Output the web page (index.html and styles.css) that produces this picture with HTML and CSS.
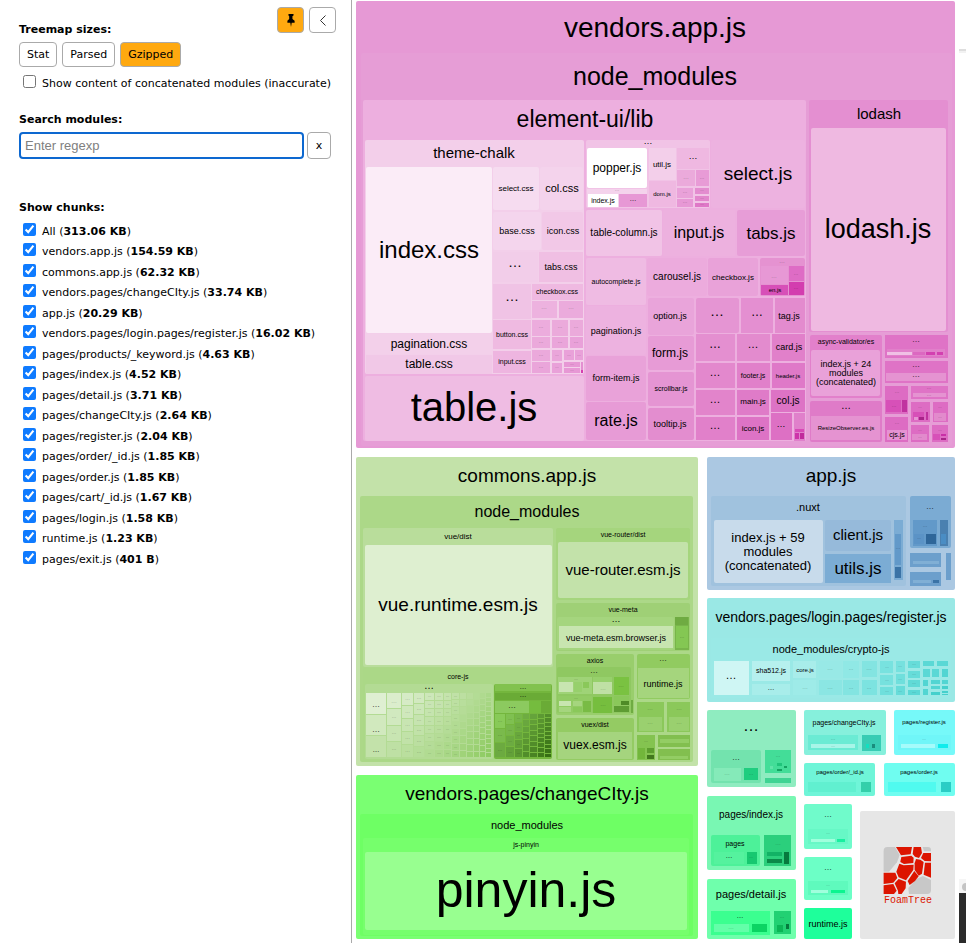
FILE: index.html
```html
<!DOCTYPE html>
<html lang="en">
<head>
<meta charset="utf-8">
<title>Webpack Bundle Analyzer</title>
<link rel="stylesheet" href="styles.css">
</head>
<body>
<div class="app">
  <aside class="sidebar">
    <div class="sidebar-top">
      <section class="sizes">
        <h2 class="heading">Treemap sizes:</h2>
        <div class="button-row">
          <button class="btn" type="button">Stat</button>
          <button class="btn" type="button">Parsed</button>
          <button class="btn active" type="button" aria-pressed="true">Gzipped</button>
        </div>
      </section>
      <div class="toggles">
        <button class="btn icon-btn active" type="button" aria-label="Pin">
          <svg width="8" height="13" viewBox="0 0 22 36"><path d="M4 0h14v4l-3 2v8l6 5v5h-8l-2 12-2-12H1v-5l5-5V6L4 4z"/></svg>
        </button>
        <button class="btn icon-btn" type="button" aria-label="Hide">
          <svg width="6" height="11" viewBox="0 0 6 11"><path d="M5.5.5.5 5.5l5 5" fill="none" stroke="#333"/></svg>
        </button>
      </div>
    </div>
    <label class="check concat"><input type="checkbox"><span>Show content of concatenated modules (inaccurate)</span></label>
    <section class="search">
      <h2 class="heading"><label for="q">Search modules:</label></h2>
      <div class="search-row">
        <input class="query" id="q" type="text" placeholder="Enter regexp">
        <button class="btn clear" type="button">x</button>
      </div>
    </section>
    <section class="chunks">
      <h2 class="heading">Show chunks:</h2>
      <div class="chunk-list">
        <label class="check"><input type="checkbox" checked><span>All (<b>313.06 KB</b>)</span></label>
        <label class="check"><input type="checkbox" checked><span>vendors.app.js (<b>154.59 KB</b>)</span></label>
        <label class="check"><input type="checkbox" checked><span>commons.app.js (<b>62.32 KB</b>)</span></label>
        <label class="check"><input type="checkbox" checked><span>vendors.pages/changeCIty.js (<b>33.74 KB</b>)</span></label>
        <label class="check"><input type="checkbox" checked><span>app.js (<b>20.29 KB</b>)</span></label>
        <label class="check"><input type="checkbox" checked><span>vendors.pages/login.pages/register.js (<b>16.02 KB</b>)</span></label>
        <label class="check"><input type="checkbox" checked><span>pages/products/_keyword.js (<b>4.63 KB</b>)</span></label>
        <label class="check"><input type="checkbox" checked><span>pages/index.js (<b>4.52 KB</b>)</span></label>
        <label class="check"><input type="checkbox" checked><span>pages/detail.js (<b>3.71 KB</b>)</span></label>
        <label class="check"><input type="checkbox" checked><span>pages/changeCIty.js (<b>2.64 KB</b>)</span></label>
        <label class="check"><input type="checkbox" checked><span>pages/register.js (<b>2.04 KB</b>)</span></label>
        <label class="check"><input type="checkbox" checked><span>pages/order/_id.js (<b>1.85 KB</b>)</span></label>
        <label class="check"><input type="checkbox" checked><span>pages/order.js (<b>1.85 KB</b>)</span></label>
        <label class="check"><input type="checkbox" checked><span>pages/cart/_id.js (<b>1.67 KB</b>)</span></label>
        <label class="check"><input type="checkbox" checked><span>pages/login.js (<b>1.58 KB</b>)</span></label>
        <label class="check"><input type="checkbox" checked><span>runtime.js (<b>1.23 KB</b>)</span></label>
        <label class="check"><input type="checkbox" checked><span>pages/exit.js (<b>401 B</b>)</span></label>
      </div>
    </section>
  </aside>
  <main class="map">
    <svg class="treemap" id="treemap" viewBox="352 0 614 943" role="img" aria-label="Bundle treemap">
      <g id="tiles"></g>
      <g id="labels"></g>
      <g transform="translate(700 700) scale(.3333)">
        <g fill="#c8c8c8">
          <path d="M551 452q0-11 11-11h23l14 24-8 22-24 28h-16z"/>
          <path d="M693 540v31q0 11-11 11h-55l-2-18 24-27 20-9z"/>
          <path d="M668 441h16q9 0 9 9v4h-21z"/>
        </g>
        <g fill="#dc1500">
          <path d="M588 441h48l-4 22-29 3z"/>
          <path d="M604 471l30-4 7 6-1 16-28 3-11-6z"/>
          <path d="M641 441h22l3 18-9 15-12-4-7-8z"/>
          <path d="M670 459h23v25l-19-1-11-9z"/>
          <path d="M644 490l4-13 13 2 10 7-5 35-10 6-12-17z"/>
          <path d="M675 488h18v45l-22-9z"/>
          <path d="M598 491l13 5 30-2-1 16-22 31-22-9-7-17z"/>
          <path d="M551 518h35l6 16-12 14-29 4z"/>
          <path d="M623 543l20-30 13 16-11 14-16 12z"/>
          <path d="M551 556l29-4 10 20-8 10h-31z"/>
          <path d="M584 550l12-13 22 8-1 20-12 17h-10l-1-10z"/>
        </g>
      </g>
      <text class="brand" x="908" y="903">FoamTree</text>
    </svg>
  </main>
</div>
<script src="treemap.js"></script>
</body>
</html>
```
FILE: styles.css
```css
* { box-sizing: border-box; }
body { margin: 0; background: #fff; color: #000; font: 11px "DejaVu Sans", Verdana, sans-serif; }
.app { display: flex; min-height: 100vh; }
.sidebar { flex: 0 0 352px; padding: 7px 15px 0 19px; border-right: 1px solid #aaa; }
.map { flex: 1; min-width: 0; }
.treemap { display: block; width: 100%; height: auto; }
.heading { margin: 0; font-size: 11px; line-height: 14px; font-weight: bold; }
.sidebar-top { display: flex; justify-content: space-between; }
.sizes { padding-top: 16px; }
.button-row { display: flex; gap: 5px; margin-top: 5px; }
.btn { height: 25px; padding: 0 7px; border: 1px solid #aaa; border-radius: 4px; background: #fff; color: #000; font: 11px "DejaVu Sans", Verdana, sans-serif; }
.btn.active { background: #ffa910; }
.toggles { display: flex; gap: 5px; }
.icon-btn { display: flex; align-items: center; justify-content: center; width: 27px; height: 26px; padding: 0; }
.check { display: flex; align-items: flex-start; gap: 6px; height: 20px; padding-left: 4px; line-height: 18px; white-space: nowrap; }
.check input { flex: none; width: 13px; height: 13px; margin: 0; accent-color: #0f7bff; }
.check:nth-child(even) { height: 21px; }
.concat { margin-top: 8px; }
.search { margin-top: 17px; }
.search-row { display: flex; gap: 3px; margin-top: 5px; padding-right: 5px; }
.query { flex: 1; min-width: 0; height: 27px; padding: 0 4px; border: 2px solid #0d68d0; border-radius: 4px; outline: 0; font: 13px "Liberation Sans", Arial, sans-serif; }
.query::placeholder { color: #808080; }
.clear { width: 24px; height: 27px; }
.chunks { margin-top: 42px; }
.chunk-list { margin-top: 8px; }
.treemap text { font-family: "Liberation Sans", Arial, sans-serif; text-anchor: middle; fill: #000; }
.treemap text.tiny { fill-opacity: .5; }
.treemap text.brand { font: 10px "Liberation Mono", monospace; fill: #dc1500; }
```
FILE: treemap.js
```javascript
// Groups of the bundle: x y width height colour, parents before children.
const tiles = `
356 1 599 447 e699d5
361 53 591 393 e69dd6
363 100 443 341 edafdf
365 140 219 234 f3cfea
366 167 126 166 fbecf7
366 334 126 20 f3d0ea
366 355 126 19 f1c8e7
493 167 46 43 f6dcf0
540 167 43 43 f4d3ec
493 212 48 38 f4d5ed
542 212 41 38 f2c8e7
493 252 45 30 f2cde9
539 252 44 30 f0bfe3
493 284 38 35 f0c3e5
532 284 51 16 efb9e1
532 301 25 17 edb2df
559 301 24 17 ebabdc
493 320 38 29 efbae1
532 320 18 16 ecacdd
552 320 16 16 ebaadb
570 320 13 16 ebaadb
532 337 18 11 eba9db
552 337 16 11 eaa5da
570 337 13 11 e9a1d9
493 351 38 22 eeb5e0
532 350 18 11 eba9db
532 362 18 11 eaa5da
552 350 10 11 eaa5da
552 363 10 10 e9a1d9
564 350 10 10 e9a1d9
575 350 8 10 e9a1d9
564 362 16 5 e798d5
564 368 16 5 e798d5
581 362 2 8 e48fd1
581 370 2 3 d63fb0
365 376 219 65 efbce3
586 140 124 68 f1c3e6
587 148 60 40 ffffff
587 189 60 18 f4d3ec
588 194 30 13 ffffff
619 194 28 13 e798d5
649 148 27 32 f3cfea
649 181 27 26 efb8e1
677 148 32 21 efb8e1
677 170 18 16 ebaadb
696 170 13 16 e89bd6
677 188 16 10 e9a1d9
677 199 16 8 e798d5
695 188 14 6 e38ccf
695 196 14 5 e286cc
695 203 14 4 df78c7
711 140 94 68 edb2e0
586 210 76 46 f1c3e6
663 210 72 46 edb1df
737 210 68 46 e79dd7
586 258 60 47 efbbe3
647 258 60 38 ecabdd
708 258 50 38 e9a2d9
760 258 45 38 e592d1
761 266 27 18 e798d5
761 285 27 10 d750b8
789 266 15 15 de6cc5
789 282 15 13 d33daf
586 306 60 49 edb2e0
586 356 60 45 e9a2d9
586 402 60 38 e79bd6
648 298 46 37 e9a4da
648 336 46 34 e79bd6
648 372 46 34 e595d3
648 408 46 32 e38dcf
696 298 43 35 e595d3
741 298 32 35 e48fd1
775 298 30 35 e38bce
696 334 39 27 e48fd0
737 334 33 27 e38bce
772 334 33 27 e180ca
696 363 39 25 e388cd
737 363 33 25 e180ca
772 363 33 25 df79c8
696 390 39 25 e284cb
737 390 32 25 df7bc8
771 390 34 22 dd73c5
696 417 39 23 e180ca
737 417 32 23 dd73c5
771 413 21 27 dd70c4
794 413 11 28 e080cb
795 429 9 3 d84ab6
795 433 4 6 cd34a9
800 433 4 6 c02a9c
809 100 139 232 e48fd1
811 128 135 203 efb9e1
810 335 72 63 e280cb
811 350 69 46 e9a1d9
810 401 72 41 df7bc8
811 416 69 24 e593d1
885 335 63 23 df73c6
887 349 58 7 e180ca
887 352 25 3 f0c0e5
913 352 12 3 dc68c1
926 352 9 3 d340b0
937 352 6 3 d340b0
885 361 63 22 df73c6
886 373 60 8 e593d1
885 386 23 28 dd6cc3
886 400 15 12 d750b8
902 400 5 12 c0329f
911 386 37 13 df73c6
913 393 33 4 e593d1
885 417 23 25 dd6cc3
887 430 20 10 e693d3
911 402 19 20 dd6cc3
913 412 11 8 d750b8
914 417 4 3 e693d3
919 417 5 3 a82489
926 412 2 8 c0329f
933 402 15 20 dd6cc3
934 413 12 8 e28acc
911 425 18 17 dd6cc3
912 434 15 6 e28acc
932 425 16 17 dd6cc3
933 434 7 6 d750b8
941 434 5 2 c930a7
941 438 5 2 a82489
356 457 342 309 c3e2a9
360 496 333 266 acd888
363 528 190 139 b9dd9b
365 545 187 120 deefd0
556 528 134 72 a5d57d
558 542 130 56 c3e2aa
556 603 134 48 9fd076
557 617 117 33 a5d57e
559 626 114 22 c8e5b0
675 617 14 33 78b54a
675 617 13 8 6fab42
676 626 12 22 84c753
556 654 78 61 99ce6c
557 667 74 46 8fc861
558 677 34 17 9fd377
559 682 14 10 c8e5b0
574 682 8 10 97d06c
583 682 6 6 8ac85a
558 696 34 17 92cb64
559 701 12 5 c8e5b0
559 707 12 5 a5d57e
573 701 9 5 a5d57e
573 707 9 5 8ac85a
583 701 8 11 79bb45
593 677 19 17 97d06c
593 682 19 12 bfe0a4
593 697 19 16 76be3e
614 677 15 18 7ac241
614 696 15 9 8ac85a
621 701 8 4 4f8b27
614 706 15 6 5e9c33
631 700 2 13 6fab42
556 718 78 42 94cb63
558 732 74 27 a5d47e
637 654 53 45 91cb60
638 668 51 30 a5d57d
637 702 27 30 8bc85a
639 717 23 14 9ad06f
667 702 23 30 8bc85a
669 717 20 14 9ad06f
637 735 18 25 84c350
638 748 7 11 72b63b
647 748 7 5 5c9d2e
647 755 7 4 42781d
658 735 32 12 82bf4f
660 739 29 4 93cd64
658 749 32 11 82bf4f
660 756 28 3 93cd64
363 668 190 93 abd887
365 684 128 75 b3db94
494 684 58 75 74b63d
495 684 56 7 82c24e
495 693 56 7 6aab36
495 701 34 12 8cca5f
529 701 12 12 75bc3e
541 701 10 12 6aab36
356 775 342 164 7aff72
360 814 333 122 6eff64
363 838 326 97 76ff6c
365 852 322 78 98ff90
707 457 248 133 abc8e2
711 496 195 90 a0c2de
714 520 109 63 c8dbeb
825 520 66 31 96bada
825 554 66 29 7bacd4
894 520 9 60 7bacd4
895 534 6 31 6299c9
895 567 6 11 3b73a6
910 496 41 52 7babd3
913 520 24 26 6299c9
914 534 10 10 5b93c6
926 534 10 10 2f6699
940 520 8 26 4a80b0
941 534 5 10 4a8dc4
910 553 31 14 6c9fcc
913 561 26 3 80afd5
946 553 5 27 6c9fcc
910 572 31 14 6c9fcc
913 580 18 3 80afd5
933 580 6 3 3b73a6
707 598 248 104 9ae8e5
711 638 240 60 9ae9e6
714 661 35 34 cff6f4
752 661 38 20 b6f0ee
752 684 38 11 a8edea
793 661 23 17 a8edea
793 680 23 15 9eebe8
819 661 23 17 98e9e6
819 680 23 15 8be6e3
843 661 16 17 90e8e5
843 680 16 15 83e4e1
862 661 15 16 83e4e1
862 680 15 15 7ce3e0
880 661 13 12 78e2df
880 675 13 10 76e1de
880 687 13 8 6fdfdc
896 661 9 11 76e1de
896 674 9 10 6fdfdc
896 686 9 9 66dcd9
908 661 12 7 66dcd9
908 671 12 7 66dcd9
908 680 12 7 60dad6
908 690 12 5 5ad8d5
923 661 11 5 5ad8d5
937 661 11 5 5ad8d5
923 669 7 8 5ad8d5
932 669 7 8 5ad8d5
942 669 6 8 52d5d2
923 680 5 6 52d5d2
923 689 5 6 52d5d2
931 680 9 4 52d5d2
931 686 9 3 52d5d2
931 692 9 3 45d0cc
942 680 6 4 52d5d2
942 686 6 3 45d0cc
942 691 6 2 45d0cc
942 694 6 1 45d0cc
707 710 89 77 8fecc0
711 750 50 33 73e3ae
714 768 27 13 85eab9
744 768 14 12 1fcd7f
765 750 26 23 43dd98
770 766 3 3 5fe5a9
777 763 5 3 20c47b
777 769 5 2 14a362
784 766 3 2 14a362
765 778 26 5 3fd493
707 796 89 74 79f7b3
711 835 49 31 4df199
714 852 30 12 55f29e
747 852 10 12 17c870
764 835 27 31 2bcf7c
767 852 15 4 12b265
767 859 15 4 0a8a49
784 852 5 12 067a3e
707 879 89 60 6fffac
711 911 59 24 3bff90
714 924 35 8 63ffa9
752 924 15 8 0bd463
774 911 17 23 22d173
777 925 6 7 0bb556
786 924 3 5 067a3e
804 710 82 45 86f0dc
808 735 50 15 6bebd4
811 744 44 4 a8f5e8
862 735 19 16 38ccb4
866 744 3 4 12e0c0
872 744 3 4 1a8d7d
894 710 61 45 76f9f9
898 735 53 15 70f6f8
901 744 34 4 a5fbfb
938 744 10 4 0fecec
804 763 71 33 6ff5d8
808 782 48 10 61f0d0
861 782 10 10 34cfaa
884 763 71 33 6ffdf0
888 782 48 10 50faef
941 782 10 10 2acdc5
804 804 48 45 70fbcb
808 829 40 15 67f8c6
811 839 24 3 a0ffdd
837 839 8 3 18f0a0
804 857 48 43 6cffc6
808 881 40 14 5ffabd
811 890 17 3 a0ffdd
831 890 14 3 0cf590
804 908 48 31 1eff9b
860 811 95 128 e6e6e6
959 49 7 2 dedede
959 51 7 2 f2f2f2
959 879 7 14 f5f5f5
959 893 7 50 2b2b2b`;

// Labels: centre x, baseline y, size, text.
const labels = `
655 37 28 vendors.app.js
655 85 25 node_modules
585 127 23 element-ui/lib
474 158 15 theme-chalk
429 258 24 index.css
429 348 12 pagination.css
429 368 12 table.css
474 421 40 table.js
516 191 8 select.css
562 192 11 col.css
517 234 9 base.css
563 234 9 icon.css
561 270 9 tabs.css
557 294 7 checkbox.css
512 337 7 button.css
512 364 7 input.css
515 267 14 …
512 301 14 …
544 309 6 …
571 309 6 …
541 328 5 …
560 328 5 …
576 328 5 …
541 343 5 …
560 343 5 …
576 343 5 …
541 356 5 …
541 368 5 …
557 356 4 …
557 368 4 …
569 356 4 …
579 356 4 …
572 365 4 …
572 371 4 …
648 144 9 …
617 172 12 popper.js
617 191 5 …
603 203 7 index.js
633 201 7 …
662 167 8 util.js
662 196 6 dom.js
693 159 9 …
686 179 6 …
702 179 5 …
685 193 5 …
685 203 5 …
702 191 4 …
702 199 4 …
702 205 4 …
758 180 19 select.js
624 236 10 table-column.js
699 238 16 input.js
771 239 17 tabs.js
616 284 7 autocomplete.js
677 280 10 carousel.js
733 280 8 checkbox.js
782 263 6 …
774 278 6 …
796 275 5 …
796 289 5 …
775 292 6 en.js
616 334 9 pagination.js
616 381 9 form-item.js
616 426 16 rate.js
670 319 9 option.js
670 357 12 form.js
671 391 7 scrollbar.js
670 427 9 tooltip.js
717 316 14 …
757 316 12 …
789 319 9 tag.js
715 348 12 …
753 348 11 …
789 350 9 card.js
715 376 11 …
753 378 7 footer.js
788 378 6 header.js
715 403 11 …
753 404 8 main.js
788 404 10 col.js
715 429 11 …
753 431 8 icon.js
781 427 9 …
879 119 15 lodash
878 238 27 lodash.js
846 344 7 async-validator/es
846 367 9 index.js + 24
846 376 9 modules
846 385 9 (concatenated)
846 409 10 …
846 430 6 ResizeObserver.es.js
916 342 8 …
916 367 8 …
916 377 8 …
897 393 5 …
894 407 5 …
929 389 5 …
929 396 5 …
897 424 5 …
897 437 7 cjs.js
920 408 4 …
940 408 4 …
940 418 4 …
920 431 4 …
920 438 4 …
940 431 4 …
527 482 19 commons.app.js
527 517 16 node_modules
458 539 8 vue/dist
458 611 19 vue.runtime.esm.js
623 537 7 vue-router/dist
623 575 15 vue-router.esm.js
623 612 7 vue-meta
616 622 9 …
616 641 9 vue-meta.esm.browser.js
682 638 5 …
595 663 7 axios
594 673 8 …
663 661 8 …
663 687 9 runtime.js
458 679 7 core-js
429 689 10 …
376 707 8 …
376 732 8 …
376 752 7 …
394 703 6 …
523 689 7 …
523 697 7 …
512 708 8 …
603 690 6 …
603 706 6 …
621 687 6 …
576 680 4 …
576 699 4 …
595 727 7 vuex/dist
595 749 12 vuex.esm.js
650 710 6 …
650 724 6 …
679 710 6 …
679 724 6 …
646 742 4 …
527 800 19 vendors.pages/changeCIty.js
527 829 11 node_modules
526 847 7 js-pinyin
526 907 50 pinyin.js
831 482 19 app.js
808 511 11 .nuxt
768 542 13 index.js + 59
768 556 13 modules
768 570 13 (concatenated)
858 540 15 client.js
858 574 17 utils.js
898 549 5 …
930 509 8 …
925 527 5 …
919 539 4 …
831 622 14 vendors.pages/login.pages/register.js
831 653 11 node_modules/crypto-js
731 679 11 …
771 673 7 sha512.js
771 690 7 …
805 672 6 core.js
805 689 6 …
830 670 6 …
830 689 6 …
851 670 5 …
851 689 5 …
869 670 6 …
869 689 5 …
887 668 4 …
887 681 4 …
887 692 4 …
900 667 4 …
900 680 4 …
900 692 4 …
914 665 4 …
914 675 4 …
914 684 4 …
914 693 4 …
751 731 16 …
736 760 8 …
727 775 6 …
751 775 5 …
778 757 5 …
751 818 10 pages/index.js
735 846 7 pages
729 858 7 …
751 858 4 …
778 845 6 …
751 898 11 pages/detail.js
740 918 7 …
731 929 6 …
782 918 5 …
844 725 7 pages/changeCIty.js
833 740 5 …
833 747 4 …
924 724 6 pages/register.js
924 740 4 …
840 774 6 pages/order/_id.js
919 774 6 pages/order.js
828 817 8 …
828 834 4 …
828 870 8 …
828 886 4 …
828 927 9 runtime.js`;

// Dense module grids: top, bottom, first and last colour, then columns of x:width:count.
const grids = [
  [693, 758, 'dfefd2', '8ecb61', '366:20:3 387:14:4 402:11:5 414:10:6 425:9:8 435:8:8 444:7:8 452:7:9 460:6:9 467:6:10 474:5:10 480:5:11 486:5:14'],
  [714, 758, '88ca58', '376f14', '495:10:3 506:8:4 515:7:5 523:6:7 530:7:8 538:6:9 545:6:10']
];

const NS = 'http://www.w3.org/2000/svg';
const tileLayer = document.getElementById('tiles');
const labelLayer = document.getElementById('labels');

function add(parent, name, attrs) {
  const el = document.createElementNS(NS, name);
  for (const key in attrs) el.setAttribute(key, attrs[key]);
  parent.appendChild(el);
  return el;
}

function mix(a, b, t) {
  return '#' + [0, 2, 4].map(i => {
    const p = parseInt(a.substr(i, 2), 16), q = parseInt(b.substr(i, 2), 16);
    return Math.round(p + (q - p) * t).toString(16).padStart(2, '0');
  }).join('');
}

for (const line of tiles.trim().split('\n')) {
  const [x, y, width, height, color] = line.split(' ');
  add(tileLayer, 'rect', { x, y, width, height, rx: width > 40 && height > 30 ? 2 : 0, fill: '#' + color });
}

for (const [top, bottom, from, to, columns] of grids) {
  const list = columns.split(' ');
  list.forEach((column, c) => {
    const [x, width, count] = column.split(':').map(Number);
    for (let r = 0; r < count; r++) {
      const y = top + Math.round((bottom - top) * r / count);
      const end = top + Math.round((bottom - top) * (r + 1) / count);
      const t = 0.65 * c / (list.length - 1) + 0.35 * r / (count - 1);
      add(tileLayer, 'rect', { x, y, width, height: end - y - 1, fill: mix(from, to, t) });
      if (end - y >= 7 && width >= 7 && width < 20 && !(width === 14 && r === 0)) {
        const dots = add(labelLayer, 'text', { class: 'tiny', x: x + width / 2, y: Math.round((y + end) / 2), 'font-size': width > 9 ? 5 : 4 });
        dots.textContent = '…';
      }
    }
  });
}

for (const line of labels.trim().split('\n')) {
  const [x, y, size, ...words] = line.split(' ');
  const text = add(labelLayer, 'text', { x, y, 'font-size': size });
  text.textContent = words.join(' ');
  if (size < 7 && words[0] === '…') text.setAttribute('class', 'tiny');
}

add(tileLayer, 'circle', { cx: 966, cy: 887, r: 4, fill: '#c4c4c4' });
```
